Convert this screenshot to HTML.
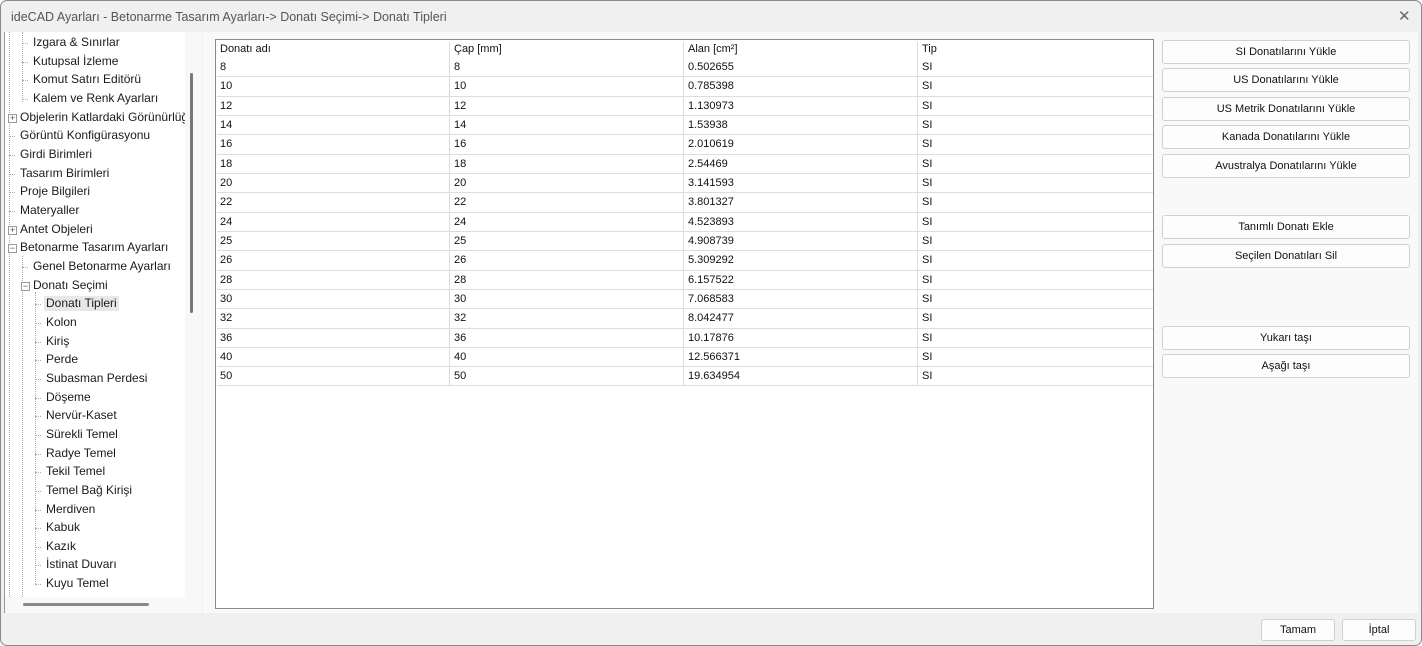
<!DOCTYPE html>
<html><head><meta charset="utf-8"><style>
*{box-sizing:border-box;margin:0;padding:0}
body{width:1422px;height:646px;background:#fff;font-family:"Liberation Sans","DejaVu Sans",sans-serif;overflow:hidden;position:relative}
.win{position:absolute;left:0;top:0;width:1422px;height:646px;background:#f0f0f0;border:1px solid #8a8a8a;border-radius:7px;overflow:hidden}
.title{position:absolute;left:10px;top:9px;font-size:12.5px;color:#555}
.close{position:absolute;left:1397px;top:6px;font-size:15px;color:#666}
.tree{position:absolute;left:3px;top:31px;width:198px;height:581px;background:#f8f8f8;border-left:1px solid #999}
.treein{position:absolute;left:0;top:0;width:180px;height:565px;background:#fff;overflow:hidden}
.it{position:absolute;font-size:12px;color:#1a1a1a;white-space:nowrap;line-height:15px}
.vl{position:absolute;border-left:1px dotted #aaa}
.hl{position:absolute;border-top:1px dotted #aaa;width:6px}
.pm{position:absolute;width:9px;height:9px;border:1px solid #999;background:#fff;font-size:9px;line-height:7px;text-align:center;color:#555}
.right{position:absolute;left:202px;top:31px;width:1215px;height:581px;background:#f9f9f9}
.tbl{position:absolute;left:214px;top:38px;width:939px;height:570px;background:#fff;border:1px solid #8a8a8a}
.c{position:absolute;font-size:11px;color:#111;white-space:nowrap}
.rl{position:absolute;left:1px;width:936px;border-top:1px solid #ddd}
.cl{position:absolute;top:2px;height:344px;border-left:1px solid #ddd}
.btn{position:absolute;left:1161px;width:248px;height:24px;background:#fdfdfd;border:1px solid #d0d0d0;border-radius:3px;font-size:11px;text-align:center;line-height:22px;color:#111}
.b2{position:absolute;top:618px;width:74px;height:22px;background:#fdfdfd;border:1px solid #d0d0d0;border-radius:3px;font-size:11px;text-align:center;line-height:20px;color:#111}
</style></head><body><div class="win">
<div class="title">ideCAD Ayarları - Betonarme Tasarım Ayarları-&gt; Donatı Seçimi-&gt; Donatı Tipleri</div>
<div class="close">✕</div>
<div class="tree"><div class="treein">
<div class="vl" style="left:4px;top:0;height:565px"></div>
<div class="vl" style="left:17px;top:0;height:70px"></div>
<div class="vl" style="left:17px;top:224px;height:341px"></div>
<div class="vl" style="left:30px;top:260px;height:292px"></div>
<div id="items"></div>
</div>
<div style="position:absolute;left:185px;top:41px;width:3px;height:240px;background:#777;border-radius:2px"></div>
<div style="position:absolute;left:18px;top:571px;width:126px;height:3px;background:#888;border-radius:2px"></div>
</div>
<div class="right"></div>
<div class="tbl" id="tbl"></div>
<div class="btn" style="top:39px">SI Donatılarını Yükle</div>
<div class="btn" style="top:67px">US Donatılarını Yükle</div>
<div class="btn" style="top:96px">US Metrik Donatılarını Yükle</div>
<div class="btn" style="top:124px">Kanada Donatılarını Yükle</div>
<div class="btn" style="top:153px">Avustralya Donatılarını Yükle</div>
<div class="btn" style="top:214px">Tanımlı Donatı Ekle</div>
<div class="btn" style="top:243px">Seçilen Donatıları Sil</div>
<div class="btn" style="top:325px">Yukarı taşı</div>
<div class="btn" style="top:353px">Aşağı taşı</div>
<div class="b2" style="left:1260px">Tamam</div>
<div class="b2" style="left:1341px">İptal</div>
</div>
<script>
var items=[[1,"Izgara & Sınırlar"],[1,"Kutupsal İzleme"],[1,"Komut Satırı Editörü"],[1,"Kalem ve Renk Ayarları"],[0,"Objelerin Katlardaki Görünürlüğü","+"],[0,"Görüntü Konfigürasyonu"],[0,"Girdi Birimleri"],[0,"Tasarım Birimleri"],[0,"Proje Bilgileri"],[0,"Materyaller"],[0,"Antet Objeleri","+"],[0,"Betonarme Tasarım Ayarları","−"],[1,"Genel Betonarme Ayarları"],[1,"Donatı Seçimi","−"],[2,"Donatı Tipleri"],[2,"Kolon"],[2,"Kiriş"],[2,"Perde"],[2,"Subasman Perdesi"],[2,"Döşeme"],[2,"Nervür-Kaset"],[2,"Sürekli Temel"],[2,"Radye Temel"],[2,"Tekil Temel"],[2,"Temel Bağ Kirişi"],[2,"Merdiven"],[2,"Kabuk"],[2,"Kazık"],[2,"İstinat Duvarı"],[2,"Kuyu Temel"]];
var h="";items.forEach(function(t,i){var y=3+i*18.66;var x=15+t[0]*13;
if(t[2]){h+='<div class="pm" style="left:'+(x-12)+'px;top:'+(y+4)+'px">'+t[2]+'</div>';}
else h+='<div class="hl" style="left:'+(x-11)+'px;top:'+(y+8)+'px"></div>';
h+='<div class="it" style="left:'+x+'px;top:'+y+'px;'+(i==14?'background:#e8e8e8;padding:0 2px;margin-left:-2px':'')+'">'+t[1].replace("&","&amp;")+'</div>';});
document.getElementById("items").innerHTML=h;
var d=[[8,"0.502655"],[10,"0.785398"],[12,"1.130973"],[14,"1.53938"],[16,"2.010619"],[18,"2.54469"],[20,"3.141593"],[22,"3.801327"],[24,"4.523893"],[25,"4.908739"],[26,"5.309292"],[28,"6.157522"],[30,"7.068583"],[32,"8.042477"],[36,"10.17876"],[40,"12.566371"],[50,"19.634954"]];
var cx=[4,238,472,706];var s="";
[233,467,701].forEach(function(x){s+='<div class="cl" style="left:'+x+'px"></div>'});
["Donatı adı","Çap [mm]","Alan [cm²]","Tip"].forEach(function(t,j){s+='<div class="c" style="left:'+cx[j]+'px;top:3px">'+t+'</div>'});
d.forEach(function(r,i){var y=21+i*19.33;
[r[0],r[0],r[1],"SI"].forEach(function(t,j){s+='<div class="c" style="left:'+cx[j]+'px;top:'+y+'px">'+t+'</div>'});
if(i>0)s+='<div class="rl" style="top:'+(y-4)+'px"></div>';});
s+='<div class="rl" style="top:345px"></div>';
document.getElementById("tbl").innerHTML=s;
</script>
</body></html>
